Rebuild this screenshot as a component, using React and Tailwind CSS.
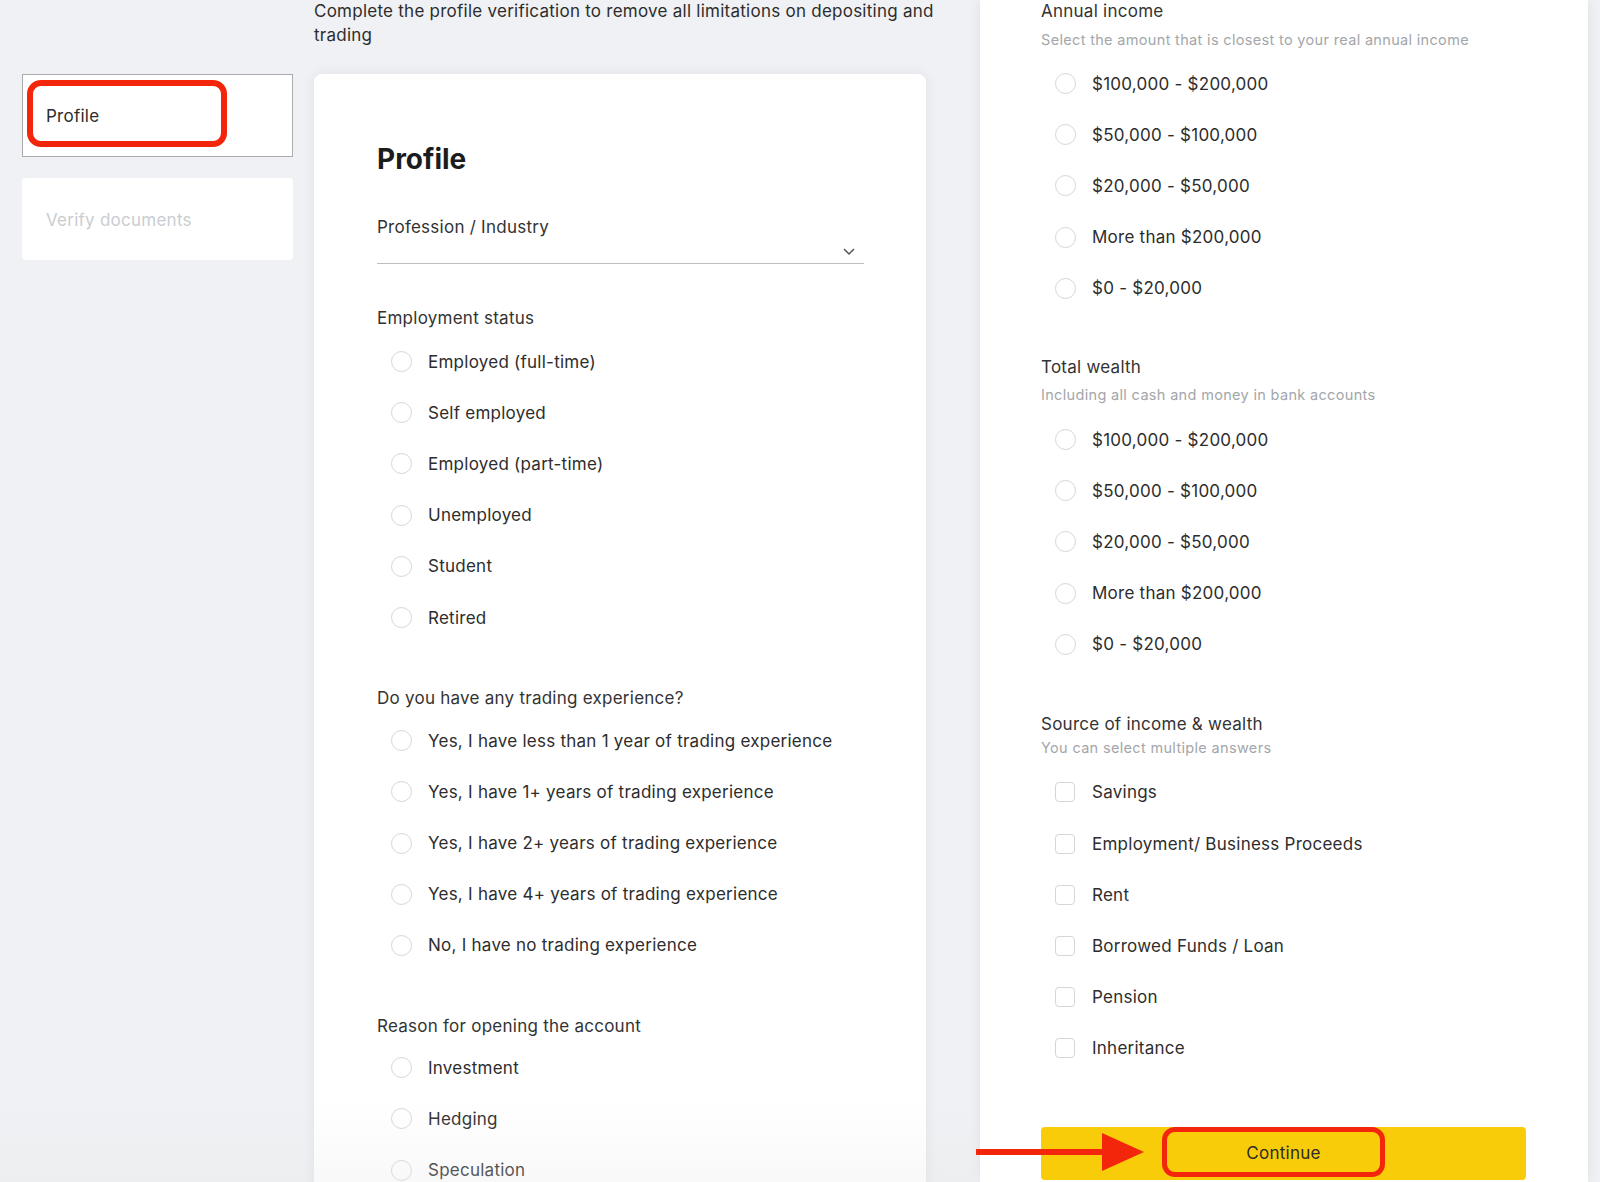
import React from 'react';

const font = { fontFamily: 'Inter, Roboto, "Liberation Sans", sans-serif' };

const employment = [
  'Employed (full-time)',
  'Self employed',
  'Employed (part-time)',
  'Unemployed',
  'Student',
  'Retired',
];

const experience = [
  'Yes, I have less than 1 year of trading experience',
  'Yes, I have 1+ years of trading experience',
  'Yes, I have 2+ years of trading experience',
  'Yes, I have 4+ years of trading experience',
  'No, I have no trading experience',
];

const reasons = ['Investment', 'Hedging', 'Speculation'];

const amounts = [
  '$100,000 - $200,000',
  '$50,000 - $100,000',
  '$20,000 - $50,000',
  'More than $200,000',
  '$0 - $20,000',
];

const sources = [
  'Savings',
  'Employment/ Business Proceeds',
  'Rent',
  'Borrowed Funds / Loan',
  'Pension',
  'Inheritance',
];

function Option({ label, square }) {
  return (
    <div className="flex items-center h-[51.2px] pl-[14px]">
      <span
        className={
          'border-[1.5px] border-[#d6d6d6] bg-white shrink-0 ' +
          (square ? 'rounded-[4px] w-[20px] h-[20px]' : 'rounded-full w-[21px] h-[21px]')
        }
      />
      <span className={(square ? 'ml-[17px] ' : 'ml-[16px] ') + 'text-[17px] text-[#2d2d2d] leading-6'}>{label}</span>
    </div>
  );
}

function Label({ children }) {
  return <div className="text-[17px] leading-6 text-[#333]">{children}</div>;
}

function Hint({ children }) {
  return <div className="text-[14.5px] leading-5 tracking-[0.33px] text-[#a3a6aa]">{children}</div>;
}

export default function App() {
  return (
    <div className="relative flex w-full h-[1182px] overflow-hidden bg-[#eff1f4] tracking-[0.25px]" style={font}>
      {/* Sidebar */}
      <div className="w-[314px] shrink-0 pl-[22px] pt-[74px]">
        <div className="relative w-[271px] h-[83px] bg-white border border-[#a9abae] flex items-center pl-[23px] pt-[2px]">
          <span className="text-[17px] text-[#2d2d2d]">Profile</span>
          <div className="absolute left-[4px] top-[5px] w-[200px] h-[67px] border-[6px] border-[#f3260c] rounded-[14px]" />
        </div>
        <div className="mt-[21px] w-[271px] h-[82px] bg-white rounded-sm flex items-center pl-[24px] pt-[4px]">
          <span className="text-[17px] text-[#c9cdd1]">Verify documents</span>
        </div>
      </div>

      {/* Middle */}
      <div className="w-[612px] shrink-0">
        <div className="mt-[-1px] text-[17px] leading-6 text-[#2d2d2d] whitespace-nowrap">
          Complete the profile verification to remove all limitations on depositing and
          <br />
          trading
        </div>
        <div className="mt-[27px] bg-white rounded-lg shadow-[0_0_14px_rgba(0,0,0,0.07)] pl-[63px] pr-[63px] pt-[67px] pb-10">
          <h1 className="text-[28px] leading-9 font-bold text-[#1c1c1c] tracking-normal">Profile</h1>
          <div className="mt-[38px]">
            <Label>Profession / Industry</Label>
            <div className="w-[487px] h-[25px] border-b border-[#bdbdbd] flex justify-end items-center pr-[8px]">
              <svg width="14" height="10" viewBox="0 0 14 10" fill="none" stroke="#555" strokeWidth="1.5">
                <path d="M2 3l5 5 5-5" />
              </svg>
            </div>
          </div>
          <div className="mt-[42px]">
            <Label>Employment status</Label>
            <div className="mt-[6px]">
              {employment.map((o) => (
                <Option key={o} label={o} />
              ))}
            </div>
          </div>
          <div className="mt-[43px]">
            <Label>Do you have any trading experience?</Label>
            <div className="mt-[5px]">
              {experience.map((o) => (
                <Option key={o} label={o} />
              ))}
            </div>
          </div>
          <div className="mt-[43px]">
            <Label>Reason for opening the account</Label>
            <div className="mt-[4px]">
              {reasons.map((o) => (
                <Option key={o} label={o} />
              ))}
            </div>
          </div>
        </div>
      </div>

      {/* Right panel */}
      <div className="ml-[54px] w-[608px] shrink-0 h-full bg-white shadow-[0_0_12px_rgba(0,0,0,0.08)] pl-[61px]">
        <div className="mt-[-1px]">
          <Label>Annual income</Label>
          <div className="mt-[7px]">
            <Hint>Select the amount that is closest to your real annual income</Hint>
          </div>
          <div className="mt-[8px]">
            {amounts.map((o) => (
              <Option key={o} label={o} />
            ))}
          </div>
        </div>
        <div className="mt-[41px]">
          <Label>Total wealth</Label>
          <div className="mt-[6px]">
            <Hint>Including all cash and money in bank accounts</Hint>
          </div>
          <div className="mt-[9px]">
            {amounts.map((o) => (
              <Option key={o} label={o} />
            ))}
          </div>
        </div>
        <div className="mt-[42px]">
          <Label>Source of income &amp; wealth</Label>
          <div className="mt-[2px]">
            <Hint>You can select multiple answers</Hint>
          </div>
          <div className="mt-[9px]">
            {sources.map((o) => (
              <Option key={o} label={o} square />
            ))}
          </div>
        </div>
        <div className="relative mt-[53px] w-[485px] h-[53px] rounded-[4px] bg-[#f8cc08] flex items-center justify-center">
          <span className="text-[17px] text-[#2b2b2b]">Continue</span>
          <div className="absolute left-[121px] top-0 w-[223px] h-[50px] border-[5px] border-[#f3260c] rounded-[13px]" />
        </div>
      </div>

      {/* bottom fade */}
      <div className="absolute left-0 bottom-0 w-[975px] h-[80px] bg-gradient-to-b from-transparent to-[#e6e6e6]/25 pointer-events-none" />

      {/* red arrow */}
      <svg className="absolute left-[976px] top-[1131px]" width="170" height="42" viewBox="0 0 170 42">
        <rect x="0" y="18" width="130" height="6" fill="#f3260c" />
        <polygon points="126,2 168,21 126,40" fill="#f3260c" />
      </svg>
    </div>
  );
}
